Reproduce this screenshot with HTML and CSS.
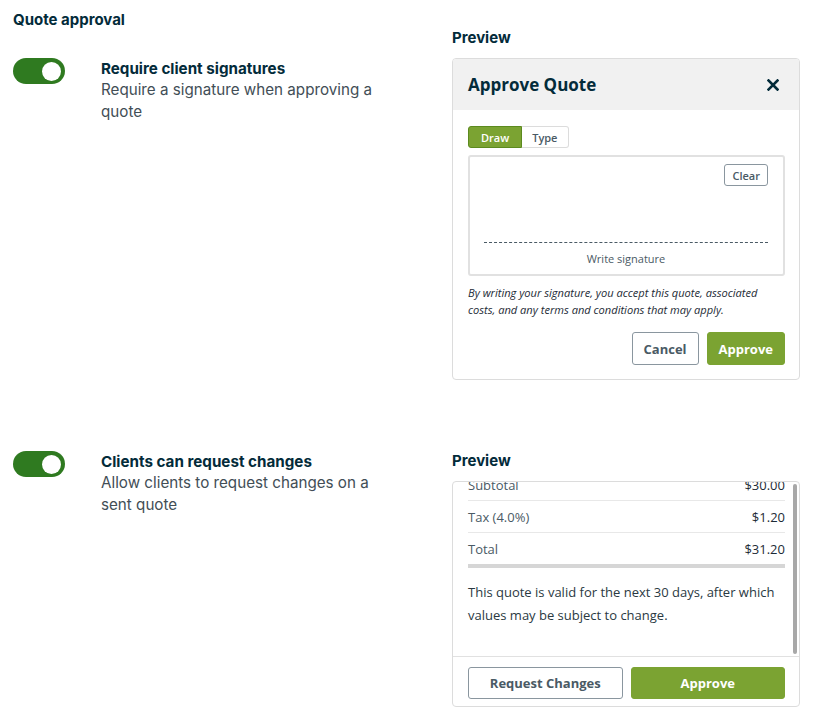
FILE: index.html
```html
<!DOCTYPE html>
<html lang="en">
<head>
  <meta charset="UTF-8">
  <title>Quote approval settings</title>
  <link rel="stylesheet" href="styles.css">
</head>
<body>
  <h2 class="page-title">Quote approval</h2>

  <section class="setting-row">
    <div class="setting setting-first">
      <span class="toggle on"><span class="knob"></span></span>
      <div class="setting-text">
        <div class="setting-title">Require client signatures</div>
        <div class="setting-desc">Require a signature when approving a quote</div>
      </div>
    </div>

    <div class="preview">
      <div class="preview-label">Preview</div>
      <div class="card">
        <div class="card-header">
          <span class="card-title">Approve Quote</span>
          <svg class="close-icon" width="12" height="12" viewBox="0 0 12 12">
            <path d="M1.5 1.5 L10.5 10.5 M10.5 1.5 L1.5 10.5" stroke="#032b3a" stroke-width="2.6" stroke-linecap="square" fill="none"/>
          </svg>
        </div>
        <div class="card-body">
          <div class="tabs">
            <span class="tab active">Draw</span>
            <span class="tab">Type</span>
          </div>
          <div class="sig-box">
            <span class="small-btn">Clear</span>
            <div class="sig-line"></div>
            <div class="sig-label">Write signature</div>
          </div>
          <p class="disclaimer">By writing your signature, you accept this quote, associated costs, and any terms and conditions that may apply.</p>
          <div class="actions">
            <button class="btn btn-outline">Cancel</button>
            <button class="btn btn-green">Approve</button>
          </div>
        </div>
      </div>
    </div>
  </section>

  <section class="setting-row second">
    <div class="setting">
      <span class="toggle on"><span class="knob"></span></span>
      <div class="setting-text">
        <div class="setting-title">Clients can request changes</div>
        <div class="setting-desc">Allow clients to request changes on a sent quote</div>
      </div>
    </div>

    <div class="preview">
      <div class="preview-label">Preview</div>
      <div class="card">
        <div class="scroll-area">
          <div class="scroll-view" id="totals">
            <div class="totals">
              <div class="total-row"><span>Subtotal</span><span class="amount">$30.00</span></div>
              <div class="total-row"><span>Tax (4.0%)</span><span class="amount">$1.20</span></div>
              <div class="total-row last"><span>Total</span><span class="amount">$31.20</span></div>
              <p class="valid-note">This quote is valid for the next 30 days, after which values may be subject to change.</p>
            </div>
          </div>
          <div class="scrollbar"><span class="thumb"></span></div>
        </div>
        <div class="card-footer">
          <button class="btn btn-outline wide">Request Changes</button>
          <button class="btn btn-green wide">Approve</button>
        </div>
      </div>
    </div>
  </section>

  <script>
    // preview is shown scrolled to the bottom
    const totals = document.getElementById('totals');
    totals.scrollTop = totals.scrollHeight;
  </script>
</body>
</html>
```

FILE: styles.css
```css
body {
  font-family: Inter, "Noto Sans", sans-serif;
  color: #032b3a;
  background-color: white;
  margin: 0;
  padding: 12px 16px 0 13px;
}

.page-title {
  font-size: 15px;
  line-height: 16px;
  font-weight: 700;
  margin: 0;
}

.setting-row {
  display: flex;
}

.setting-row.second {
  margin-top: 71px;
}

.setting {
  width: 439px;
  display: flex;
  gap: 36px;
  align-items: flex-start;
}

.setting-first {
  padding-top: 30px;
}

.toggle {
  width: 52px;
  height: 26px;
  border-radius: 13px;
  background-color: #c4c9cc;
  display: flex;
  align-items: center;
  padding: 0 4px;
  box-sizing: border-box;
  flex-shrink: 0;
}

.toggle.on {
  background-color: #2f7a20;
  justify-content: flex-end;
}

.knob {
  width: 19px;
  height: 19px;
  border-radius: 50%;
  background-color: white;
}

.setting-text {
  padding-top: 1px;
}

.setting-title {
  font-size: 15.2px;
  line-height: 20px;
  font-weight: 700;
}

.setting-desc {
  font-size: 15.2px;
  line-height: 22px;
  color: #424e56;
  max-width: 290px;
}

.preview {
  width: 348px;
}

.preview-label {
  font-size: 15px;
  line-height: 20px;
  font-weight: 700;
  margin-bottom: 10px;
}

/* preview card */
.card {
  font-family: "Open Sans", sans-serif;
  border: 1px solid #dcdcdc;
  border-radius: 4px;
  overflow: hidden;
  background-color: white;
}

.card-header {
  background-color: #f1f1f1;
  height: 51px;
  padding: 0 20px 0 15px;
  display: flex;
  align-items: center;
  justify-content: space-between;
}

.card-title {
  font-size: 17px;
  font-weight: 700;
  color: #032b3a;
}

.card-body {
  padding: 16px 14px 14px 15px;
}

.tabs {
  display: flex;
  height: 22px;
  margin-bottom: 7px;
}

.tab {
  font-size: 11px;
  font-weight: 600;
  color: #4a5a65;
  border: 1px solid #dcdcdc;
  border-left: none;
  padding: 0 11px 0 10px;
  display: flex;
  align-items: center;
  border-radius: 0 3px 3px 0;
}

.tab.active {
  background-color: #7ba332;
  border: 1px solid #5c8a1f;
  color: white;
  padding: 0 12px;
  border-radius: 3px 0 0 3px;
}

.sig-box {
  height: 121px;
  box-sizing: border-box;
  border: 2px solid #e1e1e1;
  border-radius: 3px;
  padding: 7px 15px 0 14px;
  display: flex;
  flex-direction: column;
}

.small-btn {
  align-self: flex-end;
  font-size: 11px;
  font-weight: 600;
  color: #4a5a65;
  border: 1px solid #8a969f;
  border-radius: 3px;
  height: 22px;
  box-sizing: border-box;
  padding: 0 7px;
  display: flex;
  align-items: center;
}

.sig-line {
  margin-top: auto;
  border-top: 1px dashed #4a5a65;
}

.sig-label {
  font-size: 11px;
  line-height: 16px;
  color: #4a5a65;
  text-align: center;
  padding: 8px 0 7px;
}

.disclaimer {
  font-size: 11.1px;
  line-height: 17px;
  font-style: italic;
  color: #1d2b36;
  margin: 8px 0 0;
}

.actions {
  display: flex;
  justify-content: flex-end;
  gap: 8px;
  margin-top: 14px;
}

.btn {
  font-family: "Open Sans", sans-serif;
  font-size: 13px;
  font-weight: 700;
  height: 33px;
  border-radius: 3px;
  padding: 0 11px;
  cursor: pointer;
}

.btn-outline {
  background-color: white;
  border: 1px solid #8a969f;
  color: #4a5a65;
}

.btn-green {
  background-color: #7ba332;
  border: 1px solid #7ba332;
  color: white;
}

.btn.wide {
  flex: 1;
  height: 32px;
}

.scroll-area {
  height: 174px;
  display: flex;
  border-bottom: 1px solid #e1e1e1;
}

.scroll-view {
  flex: 1;
  overflow: hidden;
}

.scrollbar {
  width: 8px;
  padding: 2px;
  box-sizing: border-box;
  display: flex;
}

.thumb {
  flex: 1;
  border-radius: 2px;
  background-color: #a8a8a8;
}

.totals {
  padding: 0 6px 29px 15px;
}

.total-row {
  display: flex;
  justify-content: space-between;
  align-items: center;
  height: 31px;
  font-size: 13px;
  color: #4a5a65;
  border-bottom: 1px solid #e8e8e8;
}

.total-row.last {
  border-bottom: 4px solid #d6d6d6;
}

.amount {
  color: #1d2b36;
}

.valid-note {
  font-size: 13px;
  line-height: 23px;
  color: #2a3942;
  margin: 13px 0 0;
}

.card-footer {
  display: flex;
  gap: 8px;
  padding: 10px 14px 7px 15px;
}
```
